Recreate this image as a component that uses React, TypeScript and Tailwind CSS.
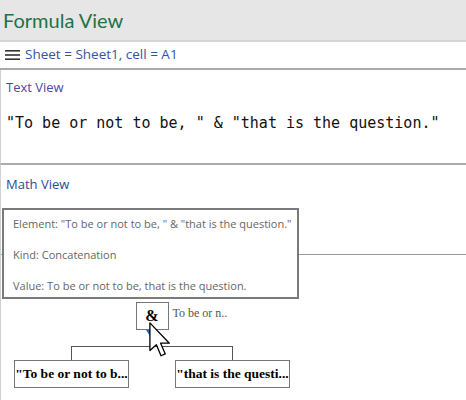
import React from 'react';

function Cursor() {
  return (
    <svg className="absolute left-[146px] top-[156px]" width="28" height="37" viewBox="0 0 14 20">
      <path d="M1 1 L1 16 L4.5 12.8 L7 18.8 L9.3 17.8 L6.8 12 L11.5 12 Z" fill="white" stroke="black" strokeWidth="0.7" strokeLinejoin="round" />
    </svg>
  );
}

function Node({ children }: { children: React.ReactNode }) {
  return (
    <div className="w-[115px] h-[28px] border border-[#777] bg-white flex items-center justify-center font-['Liberation_Serif',serif] font-bold text-[13.5px] text-black whitespace-nowrap">
      {children}
    </div>
  );
}

export default function App() {
  return (
    <div className="w-[466px] h-[400px] bg-white overflow-hidden flex flex-col font-['Open_Sans',sans-serif]">
      {/* Title bar */}
      <div className="h-[42px] shrink-0 bg-[#e6e6e6] border-b-2 border-[#d4d4d4] flex items-center px-[3px]">
        <span className="font-['Lato',sans-serif] text-[20px] text-[#217346] leading-none">Formula View</span>
      </div>

      {/* Toolbar */}
      <div className="h-[28px] shrink-0 flex items-center gap-[5px] px-[5px] border-b-2 border-[#a9a9a9]">
        <svg width="15" height="12" viewBox="0 0 15 12">
          <rect x="0" y="1" width="15" height="1.6" fill="#333" />
          <rect x="0" y="5.2" width="15" height="1.6" fill="#333" />
          <rect x="0" y="9.4" width="15" height="1.6" fill="#333" />
        </svg>
        <span className="text-[13.5px] text-[#2f55a4] leading-none">Sheet = Sheet1, cell = A1</span>
      </div>

      {/* Text View */}
      <div className="h-[95px] shrink-0 border-l border-[#d0d0d0] border-b-2 border-b-[#ababab] px-[5px] pt-[8px]">
        <div className="text-[13px] text-[#4a4aa0] leading-[18px]">Text View</div>
        <div className="mt-[17px] font-['DejaVu_Sans_Mono',monospace] text-[15px] text-[#111] leading-[20px] whitespace-pre">
          "To be or not to be, " &amp; "that is the question."
        </div>
      </div>

      {/* Math View */}
      <div className="relative flex-1 flex flex-col border-l border-[#d0d0d0]">
        <div className="px-[5px] pt-[10px] text-[13px] text-[#2a4b9b] leading-[18px]">Math View</div>

        <div className="mt-[61px] border-t border-[#9a9a9a]" />

        {/* expression tree */}
        <div className="ml-[13px] w-[276px] mt-[47px] flex flex-col items-center">
          <div className="relative">
            <div className="w-[33px] h-[28px] border border-[#777] bg-white flex items-center justify-center font-['Liberation_Serif',serif] font-bold text-[16px] text-black">&amp;</div>
            <div className="absolute left-[37px] top-[3px] font-['Liberation_Serif',serif] text-[12px] text-[#555] leading-[16px] whitespace-nowrap">To be or n..</div>
            <div className="absolute left-[10px] top-[28px] w-0 h-0 border-l-[4px] border-r-[4px] border-t-[6px] border-l-transparent border-r-transparent border-t-[#1e6fd0]" />
          </div>
          <div className="w-[1px] h-[16px] bg-[#555]" />
          <div className="w-[162px] h-[14px] border-t border-l border-r border-[#555]" />
          <div className="w-full flex justify-between">
            <Node>"To be or not to b...</Node>
            <Node>"that is the questi...</Node>
          </div>
        </div>

        <Cursor />

        {/* tooltip */}
        <div className="absolute left-[1px] top-[43px] w-[297px] h-[91px] border-2 border-[#7a7a7a] bg-white px-[9px] pt-[6px] text-[11px] text-[#666] leading-[16px] flex flex-col gap-[15px]">
          <div className="whitespace-nowrap">Element: "To be or not to be, " &amp; "that is the question."</div>
          <div>Kind: Concatenation</div>
          <div className="whitespace-nowrap">Value: To be or not to be, that is the question.</div>
        </div>
      </div>
    </div>
  );
}
